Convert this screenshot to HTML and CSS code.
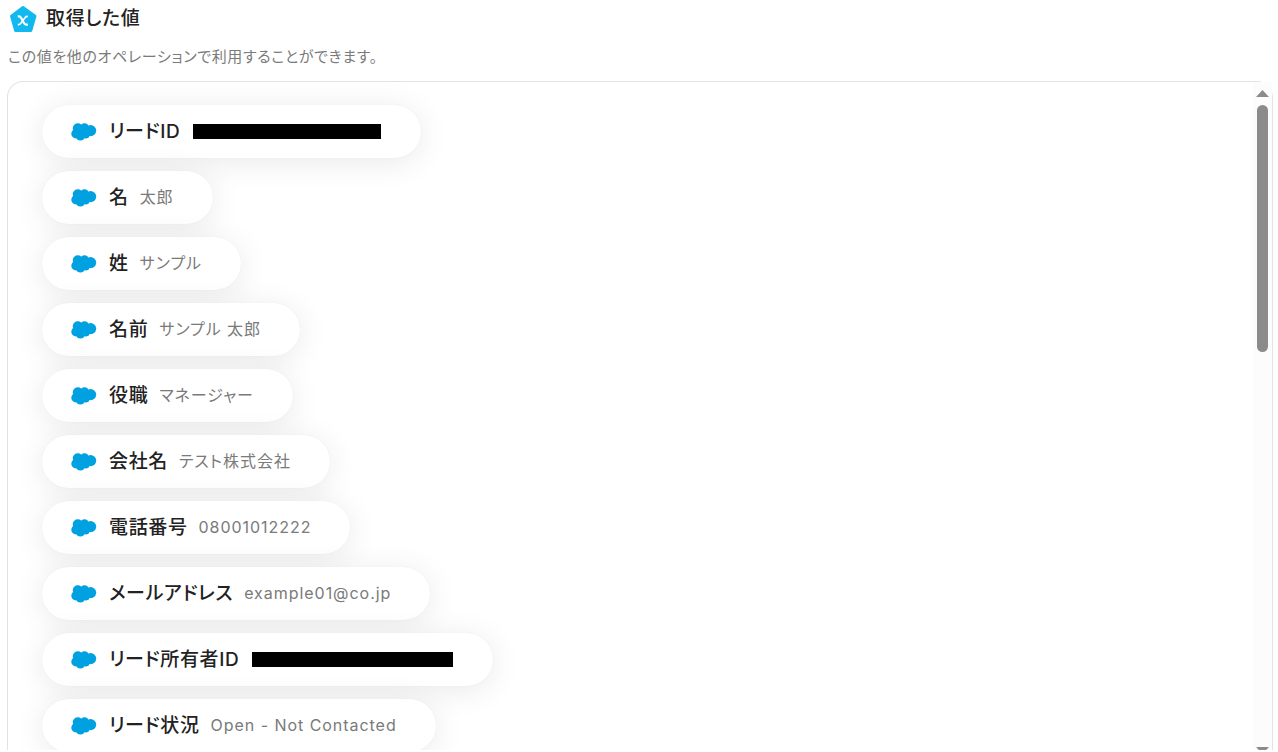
FILE: index.html
```html
<!DOCTYPE html>
<html lang="ja">
<head>
<meta charset="utf-8">
<meta name="viewport" content="width=device-width, initial-scale=1">
<title>取得した値</title>
<link rel="stylesheet" href="styles.css">
</head>
<body>
<svg class="defs" aria-hidden="true">
  <symbol id="cloud" viewBox="0 0 26 20">
    <g fill="#00a1e0">
      <circle cx="6.800" cy="6.200" r="5"/>
      <circle cx="13.500" cy="5.600" r="4.300"/>
      <circle cx="19.600" cy="8.600" r="5.600"/>
      <circle cx="4.900" cy="11.800" r="4.600"/>
      <circle cx="9.400" cy="14" r="4.500"/>
      <circle cx="14.500" cy="12" r="4.600"/>
      <path d="M3 6H20V13H8z"/>
    </g>
  </symbol>
</svg>
<main class="page">
  <header class="header">
    <svg class="header-icon" viewBox="0 0 28 28" aria-hidden="true">
      <path d="M14 2.500 26 11.200 21.800 25.500H6.600L2.500 11.200z" fill="#11b9ef" stroke="#11b9ef" stroke-width="3" stroke-linejoin="round"/>
      <path d="M8.800 11.400H9.900Q11.400 11.400 12.200 12.900L14.900 18.100Q15.700 19.600 17.200 19.600H18.800" fill="none" stroke="#fff" stroke-width="2.200"/>
      <path d="M18.800 11.400H18.300Q17 11.400 16.200 12.400L11.600 18.500Q10.700 19.600 9.600 19.600H8.800" fill="none" stroke="#fff" stroke-width="1.600"/>
    </svg>
    <h1 class="title">取得した値</h1>
  </header>
  <p class="description">この値を他のオペレーションで利用することができます。</p>
  <section class="panel">
    <ul class="values">
      <li class="pill"><svg class="cloud"><use href="#cloud"/></svg><span class="label">リードID</span><span class="masked masked-lead"></span></li>
      <li class="pill"><svg class="cloud"><use href="#cloud"/></svg><span class="label">名</span><span class="value">太郎</span></li>
      <li class="pill"><svg class="cloud"><use href="#cloud"/></svg><span class="label">姓</span><span class="value">サンプル</span></li>
      <li class="pill"><svg class="cloud"><use href="#cloud"/></svg><span class="label">名前</span><span class="value">サンプル 太郎</span></li>
      <li class="pill"><svg class="cloud"><use href="#cloud"/></svg><span class="label">役職</span><span class="value">マネージャー</span></li>
      <li class="pill"><svg class="cloud"><use href="#cloud"/></svg><span class="label">会社名</span><span class="value">テスト株式会社</span></li>
      <li class="pill"><svg class="cloud"><use href="#cloud"/></svg><span class="label">電話番号</span><span class="value">08001012222</span></li>
      <li class="pill"><svg class="cloud"><use href="#cloud"/></svg><span class="label">メールアドレス</span><span class="value">example01@co.jp</span></li>
      <li class="pill"><svg class="cloud"><use href="#cloud"/></svg><span class="label">リード所有者ID</span><span class="masked masked-owner"></span></li>
      <li class="pill"><svg class="cloud"><use href="#cloud"/></svg><span class="label">リード状況</span><span class="value">Open - Not Contacted</span></li>
    </ul>
    <div class="scrollbar" aria-hidden="true">
      <svg class="arrow" viewBox="0 0 13 7"><path d="M6.500 0 13 7H0z"/></svg>
      <div class="track"><div class="thumb"></div></div>
      <svg class="arrow arrow-down" viewBox="0 0 13 7"><path d="M0 0H13L6.500 7z"/></svg>
    </div>
  </section>
</main>
</body>
</html>
```

FILE: styles.css
```css
* {
  box-sizing: border-box;
}

body {
  margin: 0;
  background: #fff;
  color: #222;
  font-family: Inter, "Noto Sans CJK JP", sans-serif;
  font-feature-settings: "palt";
  letter-spacing: 0.04em;
}

.defs {
  position: absolute;
  width: 0;
  height: 0;
}

.page {
  display: flex;
  flex-direction: column;
  height: 100vh;
  padding: 5px 5px 2px 7px;
}

.header {
  display: flex;
  align-items: center;
  gap: 9px;
  padding-left: 2px;
}

.header-icon {
  width: 28px;
  height: 28px;
}

.title {
  margin: 0;
  font-size: 19px;
  line-height: 28px;
  font-weight: 500;
}

.description {
  margin: 12px 0;
  padding-left: 1px;
  color: #7a7a7a;
  font-size: 15px;
  line-height: 24px;
}

.panel {
  display: flex;
  flex: 1;
  min-height: 0;
  border: 1px solid #e2e2e2;
  border-bottom: 0;
  border-radius: 16px 16px 0 0;
}

.values {
  display: flex;
  flex: 1;
  flex-direction: column;
  align-items: flex-start;
  gap: 13px;
  margin: 0;
  padding: 23px 34px;
  overflow: hidden;
  border-top-left-radius: 15px;
  list-style: none;
}

.pill {
  display: flex;
  flex-shrink: 0;
  align-items: center;
  height: 53px;
  padding: 0 39px 0 29px;
  border-radius: 27px;
  background: #fff;
  box-shadow: 0 0 1px rgba(0, 0, 0, 0.08), 0 4px 32px rgba(0, 0, 0, 0.09);
  white-space: nowrap;
}

.cloud {
  width: 26px;
  height: 20px;
}

.label {
  margin: 0 11px 0 12px;
  font-size: 19px;
  line-height: 28px;
  font-weight: 500;
}

.value {
  padding-bottom: 2px;
  color: #7a7a7a;
  font-size: 16px;
  line-height: 24px;
  letter-spacing: 0.06em;
}

.masked {
  height: 15px;
  margin: 0 1px 0 2px;
  background: #000;
}

.masked-lead {
  width: 188px;
}

.masked-owner {
  width: 201px;
}

.scrollbar {
  display: flex;
  flex-direction: column;
  align-items: center;
  width: 19px;
  padding-top: 8px;
  overflow: hidden;
  background: #fcfcfc;
}

.arrow {
  flex-shrink: 0;
  width: 13px;
  height: 7px;
  fill: #8b8b8b;
}

.arrow-down {
  margin-bottom: -4px;
}

.track {
  flex: 1;
  padding-top: 8px;
}

.thumb {
  width: 11px;
  height: 38.5%;
  border-radius: 6px;
  background: #8b8b8b;
}
```
